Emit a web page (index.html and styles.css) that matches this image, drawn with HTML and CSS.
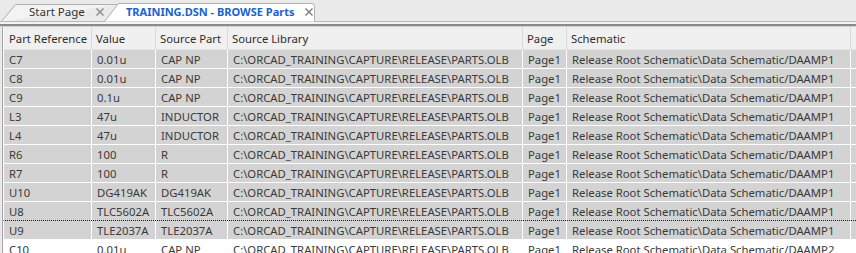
FILE: index.html
```html
<!DOCTYPE html>
<html>
<head>
<meta charset="utf-8">
<link rel="stylesheet" href="styles.css">
</head>
<body>
<div class="tabbar">
  <div class="tab tab-inactive">
    <svg class="tab-shape" width="120" height="22" viewBox="0 0 120 22"><path d="M1.5 21.5 L15.5 4.5 L119 4.5" fill="#f3f3f3" stroke="#b0b0b0" stroke-width="1"/></svg>
    <span class="tab-label">Start Page</span>
    <svg class="tab-close" width="8" height="8" viewBox="0 0 8 8"><path d="M0.5 0.5 L7.5 7.5 M7.5 0.5 L0.5 7.5" stroke="#8a8a8a" stroke-width="1.4"/></svg>
  </div>
  <div class="tab tab-active">
    <svg class="tab-shape" width="214" height="22" viewBox="0 0 214 22"><path d="M0.5 21.5 L14.5 3.5 L207.5 3.5 Q210.5 3.5 210.5 6.5 L210.5 21.5" fill="#ffffff" stroke="#b0b0b0" stroke-width="1"/></svg>
    <span class="tab-label">TRAINING.DSN - BROWSE Parts</span>
    <svg class="tab-close" width="8" height="8" viewBox="0 0 8 8"><path d="M0.5 0.5 L7.5 7.5 M7.5 0.5 L0.5 7.5" stroke="#7a7a7a" stroke-width="1.4"/></svg>
  </div>
</div>
<div class="sep"></div>
<div class="grid-wrap">
  <div class="grid">
    <div class="row head">
      <div class="cell">Part Reference</div><div class="cell">Value</div><div class="cell">Source Part</div><div class="cell">Source Library</div><div class="cell">Page</div><div class="cell">Schematic</div>
    </div>
    <div class="row sel"><div class="cell">C7</div><div class="cell">0.01u</div><div class="cell">CAP NP</div><div class="cell">C:\ORCAD_TRAINING\CAPTURE\RELEASE\PARTS.OLB</div><div class="cell">Page1</div><div class="cell">Release Root Schematic\Data Schematic/DAAMP1</div></div>
    <div class="row sel"><div class="cell">C8</div><div class="cell">0.01u</div><div class="cell">CAP NP</div><div class="cell">C:\ORCAD_TRAINING\CAPTURE\RELEASE\PARTS.OLB</div><div class="cell">Page1</div><div class="cell">Release Root Schematic\Data Schematic/DAAMP1</div></div>
    <div class="row sel"><div class="cell">C9</div><div class="cell">0.1u</div><div class="cell">CAP NP</div><div class="cell">C:\ORCAD_TRAINING\CAPTURE\RELEASE\PARTS.OLB</div><div class="cell">Page1</div><div class="cell">Release Root Schematic\Data Schematic/DAAMP1</div></div>
    <div class="row sel"><div class="cell">L3</div><div class="cell">47u</div><div class="cell">INDUCTOR</div><div class="cell">C:\ORCAD_TRAINING\CAPTURE\RELEASE\PARTS.OLB</div><div class="cell">Page1</div><div class="cell">Release Root Schematic\Data Schematic/DAAMP1</div></div>
    <div class="row sel"><div class="cell">L4</div><div class="cell">47u</div><div class="cell">INDUCTOR</div><div class="cell">C:\ORCAD_TRAINING\CAPTURE\RELEASE\PARTS.OLB</div><div class="cell">Page1</div><div class="cell">Release Root Schematic\Data Schematic/DAAMP1</div></div>
    <div class="row sel"><div class="cell">R6</div><div class="cell">100</div><div class="cell">R</div><div class="cell">C:\ORCAD_TRAINING\CAPTURE\RELEASE\PARTS.OLB</div><div class="cell">Page1</div><div class="cell">Release Root Schematic\Data Schematic/DAAMP1</div></div>
    <div class="row sel"><div class="cell">R7</div><div class="cell">100</div><div class="cell">R</div><div class="cell">C:\ORCAD_TRAINING\CAPTURE\RELEASE\PARTS.OLB</div><div class="cell">Page1</div><div class="cell">Release Root Schematic\Data Schematic/DAAMP1</div></div>
    <div class="row sel"><div class="cell">U10</div><div class="cell">DG419AK</div><div class="cell">DG419AK</div><div class="cell">C:\ORCAD_TRAINING\CAPTURE\RELEASE\PARTS.OLB</div><div class="cell">Page1</div><div class="cell">Release Root Schematic\Data Schematic/DAAMP1</div></div>
    <div class="row sel"><div class="cell">U8</div><div class="cell">TLC5602A</div><div class="cell">TLC5602A</div><div class="cell">C:\ORCAD_TRAINING\CAPTURE\RELEASE\PARTS.OLB</div><div class="cell">Page1</div><div class="cell">Release Root Schematic\Data Schematic/DAAMP1</div></div>
    <div class="row sel focus"><div class="cell">U9</div><div class="cell">TLE2037A</div><div class="cell">TLE2037A</div><div class="cell">C:\ORCAD_TRAINING\CAPTURE\RELEASE\PARTS.OLB</div><div class="cell">Page1</div><div class="cell">Release Root Schematic\Data Schematic/DAAMP1</div></div>
    <div class="row"><div class="cell">C10</div><div class="cell">0.01u</div><div class="cell">CAP NP</div><div class="cell">C:\ORCAD_TRAINING\CAPTURE\RELEASE\PARTS.OLB</div><div class="cell">Page1</div><div class="cell">Release Root Schematic\Data Schematic/DAAMP2</div></div>
  </div>
</div>
</body>
</html>
```

FILE: styles.css
```css
html, body {
  margin: 0;
  padding: 0;
  width: 856px;
  height: 253px;
  overflow: hidden;
  background: #f0f0f0;
  font-family: "Noto Sans", "Open Sans", sans-serif;
  font-size: 11.3px;
}

.tabbar {
  display: flex;
  height: 21px;
  background: #eaeaea;
  border-bottom: 1px solid #b8b8b8;
  box-sizing: content-box;
}

.tab {
  position: relative;
  display: flex;
  align-items: center;
  height: 22px;
  box-sizing: border-box;
  white-space: nowrap;
  flex-shrink: 0;
}

.tab-shape {
  position: absolute;
  left: 0;
  top: 0;
}

.tab-label,
.tab-close {
  position: relative;
}

.tab-inactive {
  width: 104px;
  padding-left: 29px;
  color: #333333;
  font-size: 11.5px;
}

.tab-inactive .tab-close {
  margin-left: 11px;
  margin-top: 1px;
}

.tab-active {
  width: 214px;
  padding-left: 22px;
  color: #1b62c6;
  font-weight: bold;
  font-size: 11px;
}

.tab-active .tab-close {
  margin-left: 11px;
  margin-top: 1px;
}

.sep {
  height: 2px;
  background: #f4f4f4;
  border-bottom: 2px solid #8a8a8a;
}

.grid-wrap {
  border-top: 1px solid #d0d0d0;
  border-left: 1px solid #e6e6e6;
  padding-left: 1px;
}

.grid {
  border-left: 1px solid #a0a0a0;
}

.row {
  display: grid;
  grid-template-columns: 88px 64px 72px 295px 44px 284px 1fr;
  height: 19px;
  box-sizing: border-box;
  border-bottom: 1px solid #ffffff;
  border-left: 1px solid #ffffff;
  color: #3a3a3a;
  background: #ffffff;
}

.row.head {
  height: 23px;
  background: #f0f0f0;
  color: #2e2e2e;
  border-bottom: 1px solid #e4e4e4;
}

.row.sel {
  background: #d3d3d3;
}

.row.focus {
  border-top: 1px dotted #202020;
  margin-top: -1px;
  height: 20px;
}

.cell {
  display: flex;
  align-items: center;
  padding-left: 5px;
  border-right: 1px solid #ffffff;
  white-space: nowrap;
  overflow: hidden;
}

.row.head .cell {
  border-right: 1px solid #d9d9d9;
  padding-left: 4px;
}

.row .cell:first-child {
  padding-left: 5px;
}
```
